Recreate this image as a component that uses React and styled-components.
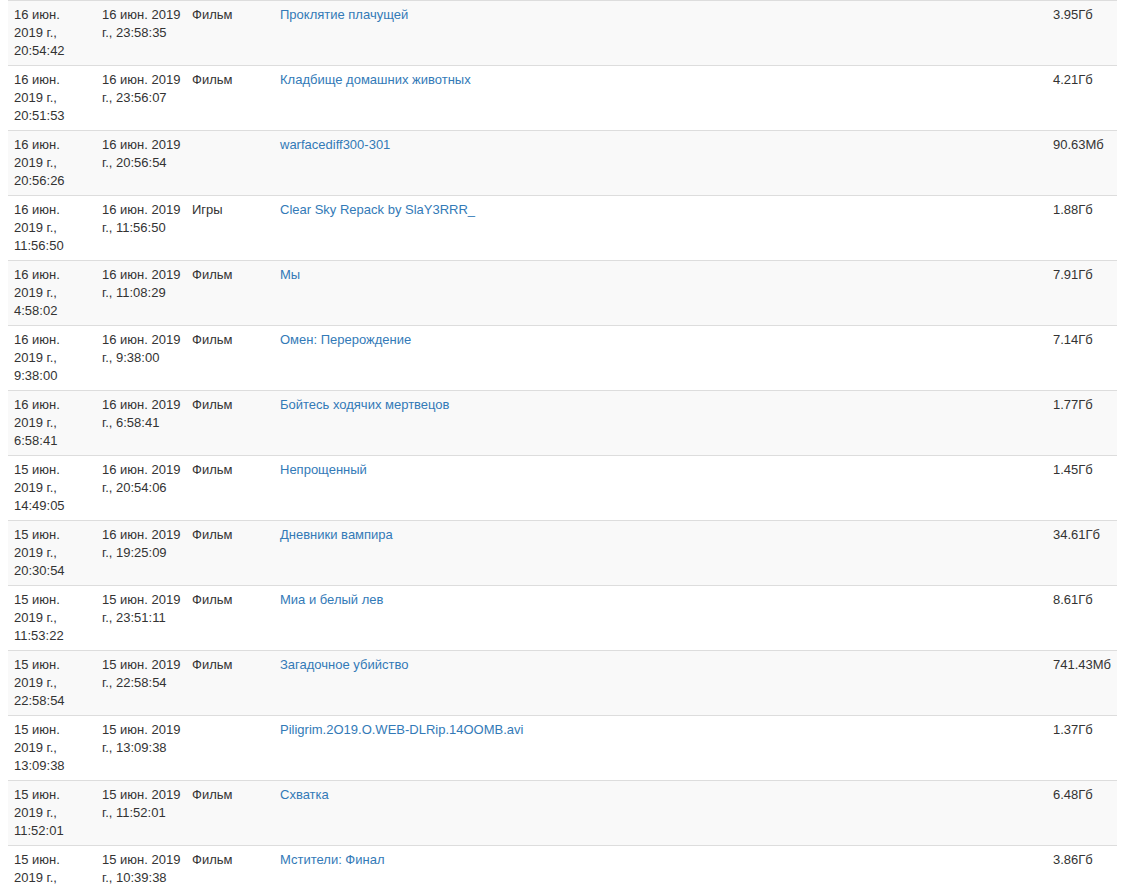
import React from 'react';
import styled, { createGlobalStyle } from 'styled-components';

const GlobalStyle = createGlobalStyle`
    html, body {
        margin: 0;
        padding: 0;
        background: #fff;
    }
    body {
        font-family: "Liberation Sans", Arial, Helvetica, sans-serif;
        font-size: 13px;
        line-height: 18px;
        color: #333;
        overflow: hidden;
    }
`;

const Page = styled.div`
    padding: 0 8px;
`;

const Table = styled.table`
    width: 100%;
    border-collapse: collapse;
    border-spacing: 0;
    table-layout: fixed;
`;

const Row = styled.tr`
    &:nth-child(odd) {
        background-color: #f9f9f9;
    }
`;

const Cell = styled.td`
    box-sizing: border-box;
    width: ${props => props.$width ? props.$width + 'px' : 'auto'};
    padding: 5px ${props => props.$padRight || 6}px 5px 6px;
    border-top: 1px solid #ddd;
    vertical-align: top;
    text-align: left;
    height: 65px;
`;

const Link = styled.a`
    color: #337ab7;
    text-decoration: none;
    cursor: pointer;
`;

const torrents = [
    ['16 июн. 2019 г., 20:54:42', '16 июн. 2019 г., 23:58:35', 'Фильм', 'Проклятие плачущей', '3.95Гб'],
    ['16 июн. 2019 г., 20:51:53', '16 июн. 2019 г., 23:56:07', 'Фильм', 'Кладбище домашних животных', '4.21Гб'],
    ['16 июн. 2019 г., 20:56:26', '16 июн. 2019 г., 20:56:54', '', 'warfacediff300-301', '90.63Мб'],
    ['16 июн. 2019 г., 11:56:50', '16 июн. 2019 г., 11:56:50', 'Игры', 'Clear Sky Repack by SlaY3RRR_', '1.88Гб'],
    ['16 июн. 2019 г., 4:58:02', '16 июн. 2019 г., 11:08:29', 'Фильм', 'Мы', '7.91Гб'],
    ['16 июн. 2019 г., 9:38:00', '16 июн. 2019 г., 9:38:00', 'Фильм', 'Омен: Перерождение', '7.14Гб'],
    ['16 июн. 2019 г., 6:58:41', '16 июн. 2019 г., 6:58:41', 'Фильм', 'Бойтесь ходячих мертвецов', '1.77Гб'],
    ['15 июн. 2019 г., 14:49:05', '16 июн. 2019 г., 20:54:06', 'Фильм', 'Непрощенный', '1.45Гб'],
    ['15 июн. 2019 г., 20:30:54', '16 июн. 2019 г., 19:25:09', 'Фильм', 'Дневники вампира', '34.61Гб'],
    ['15 июн. 2019 г., 11:53:22', '15 июн. 2019 г., 23:51:11', 'Фильм', 'Миа и белый лев', '8.61Гб'],
    ['15 июн. 2019 г., 22:58:54', '15 июн. 2019 г., 22:58:54', 'Фильм', 'Загадочное убийство', '741.43Мб'],
    ['15 июн. 2019 г., 13:09:38', '15 июн. 2019 г., 13:09:38', '', 'Piligrim.2O19.O.WEB-DLRip.14OOMB.avi', '1.37Гб'],
    ['15 июн. 2019 г., 11:52:01', '15 июн. 2019 г., 11:52:01', 'Фильм', 'Схватка', '6.48Гб'],
    ['15 июн. 2019 г., 10:39:38', '15 июн. 2019 г., 10:39:38', 'Фильм', 'Мстители: Финал', '3.86Гб'],
];

const App = () => {
    return (
        <Page>
            <GlobalStyle />
            <Table>
                <tbody>
                    {torrents.map(([added, updated, category, title, size], i) => (
                        <Row key={i}>
                            <Cell $width={88} $padRight={8}>{added}</Cell>
                            <Cell $width={90} $padRight={2}>{updated}</Cell>
                            <Cell $width={88}>{category}</Cell>
                            <Cell>
                                <Link>{title}</Link>
                            </Cell>
                            <Cell $width={70}>{size}</Cell>
                        </Row>
                    ))}
                </tbody>
            </Table>
        </Page>
    );
};

export default App;
